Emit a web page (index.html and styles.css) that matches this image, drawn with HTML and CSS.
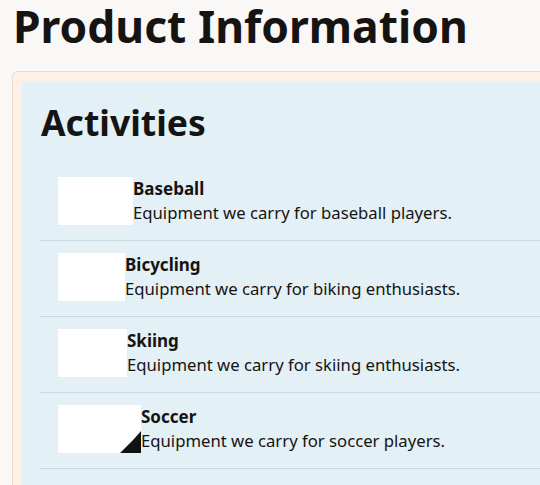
FILE: index.html
```html
<!DOCTYPE html>
<html lang="en">
<head>
<meta charset="utf-8">
<title>Product Information</title>
<link rel="stylesheet" href="styles.css">
</head>
<body>
<h1 class="page-title">Product Information</h1>
<section class="card">
  <div class="panel">
    <h2 class="panel-title">Activities</h2>
    <ul class="activity-list">
      <li class="activity">
        <div class="thumb" style="width:75px"></div>
        <div class="activity-text">
          <div class="activity-name">Baseball</div>
          <div class="activity-desc">Equipment we carry for baseball players.</div>
        </div>
      </li>
      <li class="activity">
        <div class="thumb" style="width:67px"></div>
        <div class="activity-text">
          <div class="activity-name">Bicycling</div>
          <div class="activity-desc">Equipment we carry for biking enthusiasts.</div>
        </div>
      </li>
      <li class="activity">
        <div class="thumb" style="width:69px"></div>
        <div class="activity-text">
          <div class="activity-name">Skiing</div>
          <div class="activity-desc">Equipment we carry for skiing enthusiasts.</div>
        </div>
      </li>
      <li class="activity">
        <div class="thumb thumb-soccer" style="width:83px">
          <svg class="corner" width="21" height="22" viewBox="0 0 21 22"><path d="M0 22 L14 8 L21 0 L21 22 Z" fill="#111"/></svg>
        </div>
        <div class="activity-text">
          <div class="activity-name">Soccer</div>
          <div class="activity-desc">Equipment we carry for soccer players.</div>
        </div>
      </li>
    </ul>
  </div>
</section>
</body>
</html>
```
FILE: styles.css
```css
html, body {
  margin: 0;
  padding: 0;
  overflow: hidden;
}
body {
  background: #faf8f6;
  color: #161412;
  font-family: "Noto Sans", "Open Sans", sans-serif;
  padding: 0 0 0 12px;
  width: 700px;
}
.page-title {
  margin: 0;
  font-size: 44.4px;
  line-height: 52px;
  font-weight: 700;
  padding-left: 1px;
}
.card {
  margin-top: 19px;
  border: 1px solid #ead9cc;
  border-radius: 6px;
  background: #fff0e5;
  padding: 10px 9px 9px 9px;
}
.panel {
  background: #e3f0f6;
  padding: 17px 0 20px 18px;
}
.panel-title {
  margin: 0 0 20px 1px;
  font-size: 35.5px;
  line-height: 46px;
  font-weight: 700;
}
.activity-list {
  list-style: none;
  margin: 0;
  padding: 0;
}
.activity {
  display: flex;
  align-items: flex-start;
  padding: 12px 0 15px 18px;
  border-bottom: 1px solid #cbd9e0;
}
.thumb {
  height: 48px;
  background: #ffffff;
  flex: none;
  position: relative;
}
.corner {
  position: absolute;
  right: 0;
  bottom: 0;
}
.activity-text {
  display: flex;
  flex-direction: column;
}
.activity-name {
  font-size: 17px;
  font-weight: 700;
  line-height: 24px;
}
.activity-desc {
  font-size: 16.7px;
  line-height: 24px;
}
```
